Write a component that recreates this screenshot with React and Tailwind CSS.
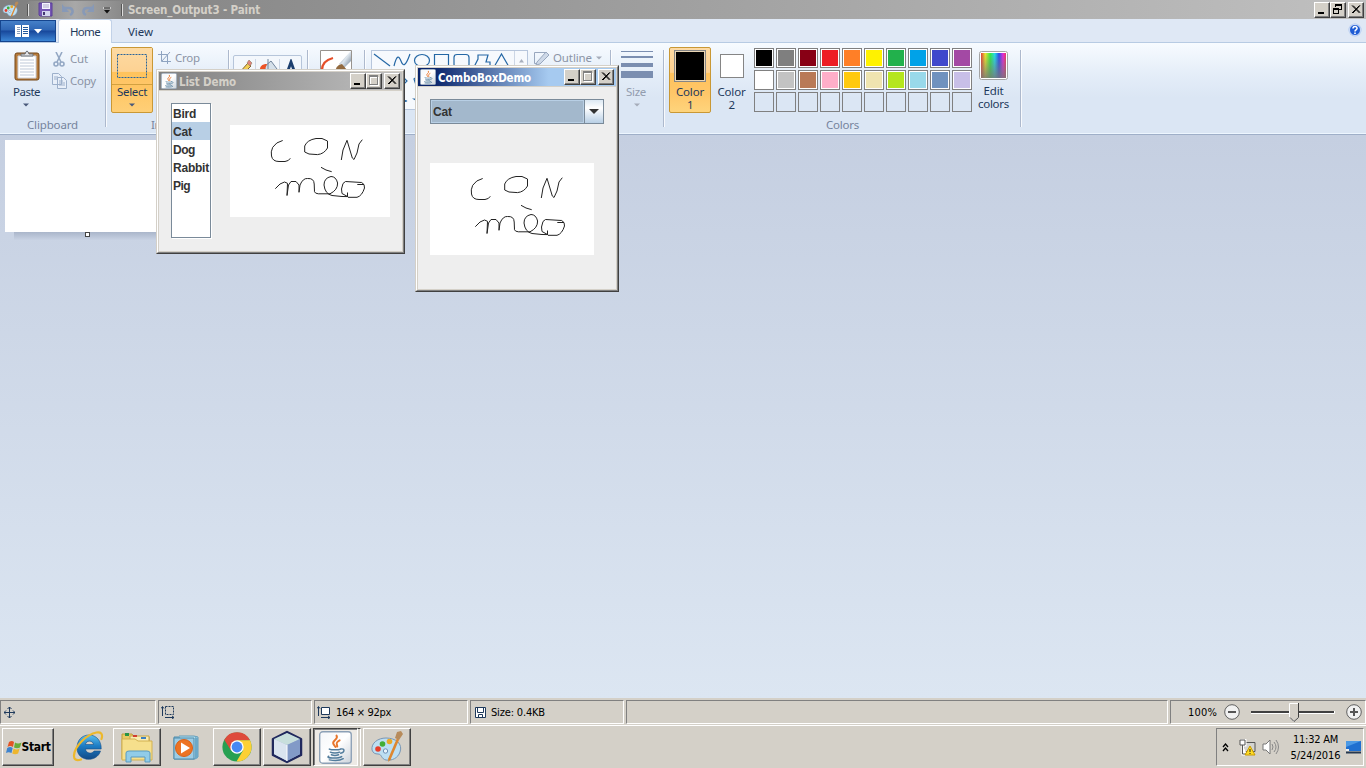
import React, { useLayoutEffect, useRef } from "react";

// Text run whose tracking is adjusted so that it fills a given width.
function Fit({ w, className = "", children }) {
  const ref = useRef(null);
  useLayoutEffect(() => {
    const el = ref.current;
    el.style.letterSpacing = "0px";
    const natural = el.getBoundingClientRect().width;
    el.style.letterSpacing = (w - natural) / String(children).length + "px";
  }, [w, children]);
  return <span ref={ref} className={"inline-block whitespace-pre " + className}>{children}</span>;
}

const Caret = ({ className = "text-[#49597a]" }) => (
  <svg width="6" height="4" className={"block " + className}><path d="M0 0.500h6L3 3.500z" fill="currentColor" /></svg>
);

function Drawing() {
  return (
    <svg width="160" height="92" viewBox="0 0 160 92" fill="none" stroke="#222" strokeWidth="1" className="block">
      <path d="M52.7 15.5Q46 17 42.7 22.3Q40.500 27 41.5 31Q42.500 36.500 49 36.5H55Q59 36 60.3 33.3" />
      <path d="M74.7 21Q77 15 86 13.500H92L97.5 16V23Q94 29 87.500 29.6L79 29L74.700 27Z" />
      <path d="M111.3 35L113 25L117 15.3L122.3 33L124 34.500L127 28L129 19L132.3 14.7" />
      <path d="M91 42.300L96 45L101.7 46.7" />
      <path d="M45.3 63.7L50 59L54.5 57L57.500 58.3L57 70.5L58.500 60L61 56.500L66 56.500L69 60V67.300L70 60Q73 53 77.500 53.500Q84 53 84.200 59L84.500 66.7Q85 68.500 88.300 68.800H100Q107.800 65 107.600 58Q106 51.500 101 51.500Q94 53 94 60Q95 69 102 70.500L112 71.500L118 71.600" />
      <path d="M117.500 67.500V71.500L112 68.500L111.500 64L113 58.500L115.500 56.500L131.7 57.500Q135 59 134.500 63Q132 71 127 72.300H118M127.300 59.500H134" />
    </svg>
  );
}

function JavaCup({ s = 16 }) {
  return (
    <svg width={s} height={s} viewBox="0 0 32 32" className="block">
      <defs><linearGradient id="jc" x1="0" y1="0" x2="1" y2="1"><stop offset="0" stopColor="#f4f6f9" /><stop offset=".5" stopColor="#fff" /><stop offset="1" stopColor="#cbd2da" /></linearGradient></defs>
      <rect x=".7" y=".7" width="30.6" height="30.6" rx="3" fill="url(#jc)" stroke="#8ca0b6" strokeWidth="1.3" />
      <g fill="none" strokeLinecap="round">
        <path d="M17 4.500c2.500 4-5.500 4.500-2.800 8.500l1.800 2.500M20 9c-4.500 2.500-2.500 3.500-2.300 6" stroke="#e8762c" strokeWidth="1.900" />
        <path d="M10 17.500c2 1 9 1 11 0M11 20.500c2 1 7 1 9 0M12 23c2 .8 5 .8 7 0M21 17.500c4.500-1 4 3.500 0 4M9.500 24.500c-4 2 9 2.500 12.500.3M10 28c5 .8 11 .4 13.500-1.200" stroke="#527c9c" strokeWidth="1.400" />
      </g>
    </svg>
  );
}

function WinButton({ type }) {
  return (
    <div className="h-[16px] w-[16px] shrink-0 border border-l-white border-t-white border-b-[#404040] border-r-[#404040] bg-[#d4d0c8] shadow-[inset_-1px_-1px_0_#808080]">
      <svg width="14" height="14" className="block" shapeRendering="crispEdges" fill="none">
        {type === "min" && <path d="M3 9h6v2H3z" fill="#000" />}
        {type === "max" && <><path d="M3.500 3.500h8v8h-8z" stroke="#fff" /><path d="M2.500 1.500h8v9h-8zM2.500 2.500h8" stroke="#808080" /><path d="M3.500 9.500v-6h6" stroke="#fff" /></>}
        {type === "restore" && <path d="M4.500 4V1.500h6v5H8M4 2.500h7M2.500 5.500h5v5h-5zM2 6.500h6" stroke="#000" />}
        {type === "close" && <path d="M3 2.500l7.500 7.500M4 2.500l7 7M10.500 2.500L3 10M11 2.500l-7 7.500" stroke="#000" shapeRendering="auto" />}
      </svg>
    </div>
  );
}

const AppIcon = ({ s = 17 }) => (
  <svg width={s} height={s} viewBox="0 0 34 34" className="block">
    <path d="M16 8C8 8 1 13 2 20c1 3 3 4 6 4 4 0 3 5 8 6 6 1 12-2 14-8 3-8-4-14-14-14z" fill="#bddff3" stroke="#7896b4" />
    <circle cx="8" cy="19" r="2.800" fill="#e63e2a" /><circle cx="12.500" cy="14" r="2.800" fill="#42ad35" /><circle cx="19.500" cy="11.500" r="2.800" fill="#eba927" /><circle cx="15.500" cy="21" r="2.200" fill="#e9f5fc" stroke="#6d8fb5" />
    <path d="M28 9l-9 21" stroke="#dd8730" strokeWidth="2.600" /><path d="M25 8l2-6 4-1 2 3-4 6z" fill="#b78b5b" /><path d="M18 32l1-4 2 1z" fill="#d98024" />
  </svg>
);

function TitleBar() {
  return (
    <div className="flex h-[19px] items-center bg-[linear-gradient(to_right,#808080,#c0c0c0)]">
      <div className="flex w-[27px] pl-[2px]"><AppIcon /></div>
      <div className="flex h-[18px] w-[96px] items-center rounded bg-[linear-gradient(to_right,#868686,#a8a8a8,#898989)]">
        <div className="h-[12px] w-[2px] border-l border-[#555] bg-[#ddd]" />
        <svg width="15" height="15" className="ml-[9px] block"><path d="M1 1h13v13H2l-1-1z" fill="#7657b5" stroke="#5a3e99" /><path d="M4 1h8v6H4z" fill="#f4f4ff" /><path d="M5 3h6M5 5h6" stroke="#ada7c9" /><path d="M4 9h8v5H4z" fill="#d3d5ee" /><path d="M5 10h2v3H5z" fill="#443672" /></svg>
        <svg width="14" height="14" className="ml-[8px] block"><path d="M3 5h5c4 0 5 5 1 7" fill="none" stroke="#8799b7" strokeWidth="2.500" /><path d="M1 1v8h7z" fill="#8799b7" /></svg>
        <svg width="14" height="14" className="ml-[7px] block"><path d="M11 5H6C2 5 1 10 5 12" fill="none" stroke="#8799b7" strokeWidth="2.500" /><path d="M13 1v8H6z" fill="#8799b7" /></svg>
        <svg width="8" height="8" className="ml-[8px] mt-[3px] block"><path d="M0 1h8" stroke="#fff" /><path d="M1 1h6" stroke="#111" /><path d="M1 3h6L4 6.500z" fill="#111" /></svg>
        <div className="ml-[10px] h-[12px] w-[2px] shrink-0 border-l border-[#555] bg-[#ddd]" />
      </div>
      <Fit w={132} className="ml-[5px] mt-[1px] font-['DejaVu_Sans_Condensed','DejaVu_Sans',sans-serif] text-[11.500px] font-bold text-[#d4d0c8]">Screen_Output3 - Paint</Fit>
      <div className="ml-auto mr-[2px] flex"><WinButton type="min" /><WinButton type="restore" /><div className="w-[2px]" /><WinButton type="close" /></div>
    </div>
  );
}

function Tabs() {
  return (
    <div className="flex h-[24px] border-b border-[#b7cbe3] bg-[#dfe8f5]">
      <div className="mt-px flex h-[22px] w-[56px] items-center justify-center gap-[5px] border border-[#15458e] bg-[linear-gradient(#4580c8,#2f66b4_45%,#17479b_50%,#3c86d5)]">
        <svg width="14" height="12" className="block"><path d="M0 0h14v12H0z" fill="#fff" /><path d="M2 2h3v1H2zm0 2h3v1H2zm0 2h3v1H2zm0 2h3v1H2z" fill="#8a9db8" /><path d="M8 2.500h5M8 4.500h5M8 6.500h5M8 8.500h5" stroke="#245a9e" /><path d="M6.500 0v12" stroke="#245a9e" /></svg>
        <svg width="8" height="5" className="block"><path d="M0 0h8L4 4.500z" fill="#fff" /></svg>
      </div>
      <div className="ml-[2px] flex h-[24px] w-[54px] items-center justify-center rounded-t-[3px] border border-b-0 border-[#c2d2e8] bg-linear-to-b from-white to-[#f7fbff] text-[#1e395b]"><Fit w={30}>Home</Fit></div>
      <div className="flex w-[57px] items-center justify-center pt-[2px] text-[#1e395b]"><Fit w={25}>View</Fit></div>
      <svg width="14" height="14" className="ml-auto mr-[4px] mt-[4px] block"><circle cx="7" cy="7" r="6.500" fill="#a9c4ef" /><circle cx="7" cy="7" r="5.500" fill="#1e5cd5" stroke="#fff" strokeWidth=".7" /><path d="M5 5.500C5 2.500 9.300 3 9 5.500 8.800 7 7 6.800 7 8.500M7 9.500v1.500" fill="none" stroke="#fff" strokeWidth="1.600" /></svg>
    </div>
  );
}

function Group({ className = "", label, lw, children }) {
  return (
    <div className={"flex h-[91px] shrink-0 pt-[4px] " + className}>
      <div className="flex min-w-0 flex-1 flex-col">
        <div className="flex h-[70px]">{children}</div>
        <div className="mt-px flex h-[14px] items-center justify-center text-[#76849d]">{label && <Fit w={lw}>{label}</Fit>}</div>
      </div>
      <div className="mt-[3px] h-[77px] w-[2px] shrink-0 border-l border-[#adb9cd] bg-white/80" />
    </div>
  );
}

const Shape = ({ d }) => <svg width="20" height="20" className="block" fill="none" stroke="#2467a5" strokeWidth="1.200"><path d={d} /></svg>;
const shapes = [
  "M2 3L18 15", "M2 15C5 3 7 5 9 10s4 7 9-7", "M2.500 9.500a7.500 6 0 1 0 15 0a7.500 6 0 1 0-15 0", "M2.500 3.500h14v13h-14z", "M5 3.500h9q3 0 3 3v7q0 3-3 3H5q-3 0-3-3v-7q0-3 3-3z", "M2 16L6 8V4h10l-2 7h4v5z", "M2 16L9.500 3L17 16z",
  "M3 3v14h14z", "M10 5l5 5-5 5-5-5z", "M10 2l8 6-3 9H5L2 8z", "M6 3h8l4 7-4 7H6l-4-7z", "M2 7h9V3l7 7-7 7v-4H2z", "M18 7H9V3l-7 7 7 7v-4h9z", "M7 18V9H3l7-7 7 7h-4v9z",
  "M7 2v9H3l7 7 7-7h-4V2z", "M10 5l1 4 4 1-4 1-1 4-1-4-4-1 4-1z", "M10 2l2 6h6l-5 3 2 7-5-4-5 4 2-7-5-3h6z", "M10 2l3 4h5l-3 4 3 5h-5l-3 3-3-3H2l3-5-3-4h5z", "M3 3h14v10H9l-4 4v-4H3z", "M3 8a7 5 0 1 1 6 5l-4 4v-5z", "M4 12a4 4 0 1 1 3-8a5 4 0 1 1 8 8z",
];

const row1 = ["bg-[#000]", "bg-[#7f7f7f]", "bg-[#880015]", "bg-[#ed1c24]", "bg-[#ff7f27]", "bg-[#fff200]", "bg-[#22b14c]", "bg-[#00a2e8]", "bg-[#3f48cc]", "bg-[#a349a4]"];
const row2 = ["bg-white", "bg-[#c3c3c3]", "bg-[#b97a57]", "bg-[#ffaec9]", "bg-[#ffc90e]", "bg-[#efe4b0]", "bg-[#b5e61d]", "bg-[#99d9ea]", "bg-[#7092be]", "bg-[#c8bfe7]"];

function Ribbon() {
  return (
    <div className="flex h-[92px] border-b border-[#9fafc8] bg-[linear-gradient(#f7fbff,#e4edf8_35%,#dbe6f4_60%,#dbe6f4)] shadow-[inset_0_-1px_0_#edf6ff]">
      <Group className="w-[107px]" label="Clipboard" lw={51}>
        <div className="flex w-[52px] flex-col items-center pt-[3px] text-[#1e395b]">
          <svg width="26" height="31" className="ml-[1px] block"><rect x="1" y="3" width="24" height="27" rx="2" fill="#b77c3c" stroke="#754718" /><path d="M4 6h18v22H4z" fill="#fff" stroke="#ccd1dc" /><path d="M6 10h14M6 13h14M6 16h14M6 19h14M6 22h14M6 25h14" stroke="#bfc9d8" /><path d="M7 6V4h4q2-6 4 0h4v2z" fill="#e3e3e6" stroke="#686e77" /></svg>
          <Fit w={27} className="ml-[1px] mt-[3px] leading-[16px]">Paste</Fit>
          <Caret className="mt-[3px] text-[#49597a]" />
        </div>
        <div className="flex flex-col pt-[1px] text-[#8b94a5]">
          <div className="flex h-[22px] items-center"><svg width="13" height="15" className="ml-[1px] block" fill="none" stroke="#94a8c4" strokeWidth="1.600"><path d="M3 0l5 10M9 0L4 10" /><circle cx="3" cy="12" r="2" /><circle cx="9" cy="12" r="2" /></svg><Fit w={18} className="ml-[4px]">Cut</Fit></div>
          <div className="flex h-[22px] items-center"><svg width="16" height="16" className="block" fill="#e8eff9" stroke="#9db0cb"><path d="M.5.500h6l3 3v8h-9zM5.500 4.500h6l3 3v8h-9z" /><path d="M2 4h4M2 6h3M7 8h4M7 10h6M7 12h6" /></svg><Fit w={26} className="ml-[2px]">Copy</Fit></div>
        </div>
      </Group>
      <Group className="w-[123px]" label="Image" lw={33}>
        <div className="ml-[4px] flex h-[66px] w-[42px] flex-col items-center rounded-[2px] border border-[#c99835] bg-[linear-gradient(#fed08a,#ffc562_60%,#fecf77)] text-[#1e395b]">
          <div className="flex h-[37px] w-full items-center justify-center border-b border-[#d3a140] bg-[linear-gradient(#fddaa2,#fdd293_65%,#ffc35b_68%,#ffc668)]"><svg width="30" height="24" className="block"><path d="M.5.500h29v23H.5z" fill="none" stroke="#28649a" strokeDasharray="2 1" /></svg></div>
          <Fit w={30} className="leading-[14px]">Select</Fit>
          <Caret className="mt-[4px] text-[#49597a]" />
        </div>
        <div className="ml-[5px] flex h-[22px] items-center text-[#8b94a5]"><svg width="13" height="14" className="block" fill="none" stroke="#8fa4c1"><path d="M0 3.500h9.500V13M3.500 0v10.500H13M12 1L4 10" /></svg><Fit w={25} className="ml-[4px]">Crop</Fit></div>
      </Group>
      <Group className="w-[79px]" label="Tools" lw={28}>
        <div className="ml-[3px] mt-[8px] flex h-[46px] w-[69px] rounded-[2px] border border-[#b6c5da] bg-[#f3f7fc] pt-[3px]">
          <svg width="22" height="20" className="block border-r border-[#ccd7e6]"><path d="M5 14L14 4l3 3L8 16l-4 1z" fill="#f2ce55" stroke="#806632" /><path d="M13 4l2-3 3 3-2 3z" fill="#e1847c" stroke="#8b7a5f" strokeWidth=".6" /></svg>
          <svg width="24" height="20" className="block border-r border-[#ccd7e6]"><path d="M8 8l7-6 6 8-7 7z" fill="#d5e0ea" stroke="#71859c" /><path d="M12 10V0" stroke="#71859c" /><path d="M4 14C3 7 6 5 11 5l-3 8z" fill="#ec5326" /></svg>
          <svg width="21" height="20" className="block"><path d="M6 17L11 3l5 14M8 12h6" fill="none" stroke="#1d3f6e" strokeWidth="2.800" /></svg>
        </div>
      </Group>
      <Group className="w-[57px]">
        <svg width="32" height="32" className="ml-[11px] mt-[3px] block"><defs><linearGradient id="brush" x2="1" y2="1"><stop stopColor="#4f6379" /><stop offset=".5" stopColor="#dfe7ee" /><stop offset="1" stopColor="#65788d" /></linearGradient></defs><path d="M.5.500h31v31H.5z" fill="#fff" stroke="#97938e" /><path d="M2 22Q1 11 13 8" fill="none" stroke="#e54f29" strokeWidth="2.200" /><path d="M19 14L31 1v10l-7 7z" fill="url(#brush)" /><path d="M15 24Q15 15 22 14l5 6-8 10z" fill="#926a3f" /></svg>
      </Group>
      <Group className="w-[246px]" label="Shapes" lw={37}>
        <div className="ml-[5px] mt-[3px] flex h-[60px] w-[157px] border border-[#b7c6dc] bg-[#f6f9fd]">
          <div className="grid w-[142px] grid-cols-[repeat(7,20px)] content-start overflow-hidden">{shapes.map((d, i) => <Shape key={i} d={d} />)}</div>
          <div className="flex h-[20px] w-[13px] items-center justify-center border-b border-l border-[#ccd6e5]"><svg width="5" height="4"><path d="M0 3.500h5L2.500 0z" fill="#a7afbd" /></svg></div>
        </div>
        <div className="ml-[5px] flex h-[22px] items-center text-[#8b94a5]"><svg width="17" height="16" className="block" fill="none" stroke="#98a7be"><path d="M13 2.500H1.500v11h2" /><path d="M4 12L13 2l3 3L7 14l-4 1z" fill="#ced9e8" /></svg><Fit w={39} className="ml-[3px]">Outline</Fit><Caret className="ml-[4px] text-[#a6acb9]" /></div>
      </Group>
      <Group className="w-[53px]">
        <div className="flex w-[48px] flex-col items-center pt-[4px] text-[#929cae]">
          <div className="ml-[2px] h-px w-[32px] bg-[#7b8eb0]" /><div className="ml-[2px] mt-[4px] h-[2px] w-[32px] bg-[#7b8eb0]" /><div className="ml-[2px] mt-[5px] h-[4px] w-[32px] bg-[#7b8eb0]" /><div className="ml-[2px] mt-[4px] h-[7px] w-[32px] bg-[#7b8eb0]" />
          <Fit w={20} className="mt-[6px] leading-[16px]">Size</Fit><Caret className="ml-[1px] mt-[3px] text-[#a6acb9]" />
        </div>
      </Group>
      <Group className="w-[357px]" label="Colors" lw={33}>
        <div className="ml-[4px] flex h-[66px] w-[42px] flex-col items-center rounded-[2px] border border-[#c99835] bg-[linear-gradient(#fddaa4,#fdd08f_38%,#ffc25c_40%,#ffc668_70%,#fed47c)] text-[#1e395b]">
          <div className="mt-[2px] h-[32px] w-[32px] border border-[#858585] bg-[#ead6b5] p-[1px]"><div className="h-full bg-black" /></div>
          <Fit w={28} className="mt-[3px] leading-[13px]">Color</Fit><Fit w={6} className="leading-[13px]">1</Fit>
        </div>
        <div className="flex w-[41px] flex-col items-center pt-[7px] text-[#1e395b]">
          <div className="h-[24px] w-[24px] border border-[#858585] bg-white" /><Fit w={28} className="mt-[7px] leading-[13px]">Color</Fit><Fit w={6} className="leading-[13px]">2</Fit>
        </div>
        <div className="ml-[2px] mt-[1px] grid h-[64px] grid-cols-[repeat(10,20px)] grid-rows-[repeat(3,20px)] gap-[2px]">
          {[...row1, ...row2].map((c, i) => <div key={i} className="border border-[#808080] bg-white p-[1px]"><div className={"h-full " + c} /></div>)}
          {row1.map((c) => <div key={c} className="border border-[#808080]" />)}
        </div>
        <div className="flex w-[43px] flex-col items-center pt-[4px] text-[#1e395b]">
          <svg width="30" height="30" className="block"><defs><linearGradient id="hue"><stop stopColor="#e53c35" /><stop offset=".17" stopColor="#eee82d" /><stop offset=".37" stopColor="#30ed45" /><stop offset=".55" stopColor="#23ddec" /><stop offset=".72" stopColor="#294bee" /><stop offset=".88" stopColor="#e72adf" /><stop offset="1" stopColor="#ef355c" /></linearGradient><linearGradient id="fade" x2="0" y2="1"><stop stopColor="#777" stopOpacity="0" /><stop offset="1" stopColor="#777" stopOpacity=".85" /></linearGradient></defs><rect x=".5" y=".5" width="28" height="28" rx="2" fill="#fff" stroke="#a3a3a3" /><path d="M2 2h25v25H2z" fill="url(#hue)" /><path d="M2 2h25v25H2z" fill="url(#fade)" /></svg>
          <Fit w={20} className="mt-[3px] leading-[13px]">Edit</Fit><Fit w={31} className="leading-[13px]">colors</Fit>
        </div>
      </Group>
    </div>
  );
}

function DemoWindow({ title, tw, active, className, children }) {
  return (
    <div className={"absolute border border-b-[#404040] border-l-[#d4d0c8] border-r-[#404040] border-t-[#d4d0c8] bg-[#eee] " + className}>
      <div className="flex h-full flex-col border border-b-[#808080] border-l-white border-r-[#808080] border-t-white">
        <div className="flex h-full flex-col border border-[#d4d0c8]">
          <div className={"flex h-[18px] shrink-0 items-center pl-[2px] pr-[2px] " + (active ? "bg-[linear-gradient(to_right,#0a246a_8%,#a6caf0_66%)] text-white" : "bg-[linear-gradient(to_right,#808080,#c0c0c0)] text-[#d4d0c8]")}>
            <JavaCup />
            <Fit w={tw} className="ml-[2px] mt-px font-['DejaVu_Sans_Condensed','DejaVu_Sans',sans-serif] text-[11.500px] font-bold">{title}</Fit>
            <div className="ml-auto flex"><WinButton type="min" /><WinButton type="max" /><div className="w-[2px]" /><WinButton type="close" /></div>
          </div>
          <div className="h-px shrink-0 bg-[#d4d0c8]" />
          {children}
        </div>
      </div>
    </div>
  );
}

const animals = [["Bird", 23], ["Cat", 19], ["Dog", 22], ["Rabbit", 36], ["Pig", 17]];

function ListDemo() {
  return (
    <DemoWindow title="List Demo" tw={57} className="left-[156px] top-[69px] h-[185px] w-[249px]">
      <div className="flex pl-[12px] pt-[12px] font-['Liberation_Sans',sans-serif] text-[12px] font-bold text-[#333]">
        <div className="h-[135px] w-[40px] border border-[#7a8a99] bg-white shadow-[1px_1px_0_#fff]">
          {animals.map(([name, w]) => <div key={name} className={"flex h-[18px] items-center pl-px pt-[2px] " + (name === "Cat" ? "bg-[#b8cfe5]" : "")}><Fit w={w}>{name}</Fit></div>)}
        </div>
        <div className="ml-[19px] mt-[22px] h-[92px] w-[160px] bg-white"><Drawing /></div>
      </div>
    </DemoWindow>
  );
}

function ComboDemo() {
  return (
    <DemoWindow title="ComboBoxDemo" tw={93} active className="left-[415px] top-[65px] h-[227px] w-[204px]">
      <div className="flex flex-col pl-[12px] pt-[12px] font-['Liberation_Sans',sans-serif] text-[12px] font-bold text-[#333]">
        <div className="flex h-[25px] w-[174px] border border-[#7a8a99]">
          <div className="flex w-[153px] items-center border border-[#b8cfe5] bg-[#a3b8cc] pl-[1px]"><Fit w={19}>Cat</Fit></div>
          <div className="flex flex-1 items-center justify-center border-l border-[#7a8a99] bg-linear-to-b from-[#dce8f3] via-white via-35% to-[#b8cfe5]"><svg width="10" height="5" className="block"><path d="M0 0h10L5 5z" fill="#333" /></svg></div>
        </div>
        <div className="mt-[39px] h-[92px] w-[164px] bg-white"><Drawing /></div>
      </div>
    </DemoWindow>
  );
}

function Workspace() {
  return (
    <div className="h-[563px] bg-linear-to-b from-[#c5cfe1] to-[#dce6f2] pl-[5px] pt-[5px]">
      <div className="h-[92px] w-[164px] bg-white" />
      <div className="ml-[9px] flex h-[8px] w-[160px] bg-linear-to-b from-[#aab6ca] to-[#c8d2e3]"><div className="ml-[71px] h-[5px] w-[5px] border border-[#444] bg-white" /></div>
    </div>
  );
}

const pane = "flex h-[24px] items-center border border-b-white border-l-[#808080] border-r-white border-t-[#808080] ";
const Round = ({ plus }) => <svg width="16" height="16" className="block" fill="none"><circle cx="8" cy="8" r="7.300" fill="#f1f1f1" stroke="#606060" /><path d={plus ? "M4 8h8M8 4v8" : "M4 8h8"} stroke="#555" strokeWidth="2" /></svg>;

function StatusBar() {
  return (
    <div className="flex h-[26px] gap-[2px] bg-[#d4d0c8] pt-[2px] font-['DejaVu_Sans_Condensed','DejaVu_Sans',sans-serif] text-[11px] text-black">
      <div className={pane + "w-[156px] pl-[3px]"}><svg width="11" height="11" className="block" fill="none" stroke="#1e395b"><path d="M0 5.500h11M5.500 0v11M3.500 2l2-2 2 2M3.500 9l2 2 2-2M2 3.500l-2 2 2 2M9 3.500l2 2-2 2" /></svg></div>
      <div className={pane + "w-[154px] pl-[2px]"}><svg width="14" height="13" className="block" fill="none" stroke="#1e395b"><path d="M1.500 10V1M0 2.500l1.500-2 1.500 2M4 11.500h9M11 10l2 1.500-2 1.500" /><path d="M4.500.500h8v8h-8z" strokeDasharray="2 1" /></svg></div>
      <div className={pane + "w-[154px] pl-[2px]"}><svg width="14" height="13" className="block" fill="none" stroke="#1e395b"><path d="M1.500 10V1M0 2.500l1.500-2 1.500 2M4 11.500h9M11 10l2 1.500-2 1.500" /><path d="M4.500 1.500h8v7h-8z" fill="#fff" /></svg><Fit w={55} className="ml-[5px] pt-px">164 × 92px</Fit></div>
      <div className={pane + "w-[154px] pl-[4px]"}><svg width="11" height="11" className="block" fill="#fff" stroke="#1e395b"><path d="M.5.500h10v10H.5zM2.500.500h6v5h-6zM3.500 7.500h4v3h-4z" /></svg><Fit w={54} className="ml-[5px] pt-px">Size: 0.4KB</Fit></div>
      <div className={pane + "w-[542px]"} />
      <div className={pane + "w-[196px] pl-[17px]"}>
        <Fit w={29} className="pt-px">100%</Fit><div className="ml-[7px]"><Round /></div>
        <svg width="84" height="20" className="ml-[11px] block"><path d="M0 9h83v2H0z" fill="#404040" /><path d="M0 11.500h83.500V9" stroke="#fff" fill="none" /><path d="M38.500 1.500h9v14l-4.500 4-4.500-4z" fill="#d4d0c8" stroke="#fff" /><path d="M47.500 1v14.500l-4.500 4-4-4" fill="none" stroke="#404040" /></svg>
        <div className="ml-[11px]"><Round plus /></div>
      </div>
    </div>
  );
}

const raised = "flex h-[38px] shrink-0 items-center justify-center border border-l-white border-t-white border-b-[#404040] border-r-[#404040] shadow-[inset_-1px_-1px_0_#808080] ";
const WinFlag = () => <svg width="16" height="15" className="block"><path d="M3 2q3-2 5 0L7 7Q4 5 1.500 7z" fill="#e35424" /><path d="M9 2.500q3 2 6.500 0l-1.500 5q-3 1.500-6 0z" fill="#69ad38" /><path d="M1.200 8q3-2 5.500 0l-1.200 5q-3-1.500-5.500 0z" fill="#3e83ce" /><path d="M7.600 8.500q3 1.800 6 0l-1.500 5q-3 1.500-5.800 0z" fill="#eeb62e" /></svg>;

function Taskbar() {
  return (
    <div className="flex h-[44px] bg-[#d4d0c8] font-['DejaVu_Sans_Condensed','DejaVu_Sans',sans-serif] text-[11px] shadow-[inset_0_1px_0_#d4d0c8,inset_0_2px_0_#fff]">
      <div className="flex items-center pl-[2px] pt-[2px]">
        <div className={raised + "w-[52px]"}><WinFlag /><Fit w={29} className="text-[12px] font-bold text-black">Start</Fit></div>
        <svg width="32" height="32" className="ml-[18px] block" fill="none"><defs><linearGradient id="ie" x2="0" y2="1"><stop stopColor="#5cc0ee" /><stop offset=".45" stopColor="#1d7cc4" /><stop offset="1" stopColor="#124a86" /></linearGradient></defs><path fillRule="evenodd" d="M17 4C24.500 4 29.500 10 29.200 18H13.500C13.800 22.500 20 23.500 22 20H28.500C25 32 5 31 5 17C5 9 10 4 17 4zM13.500 13.500H21.500C21 9 14 9 13.500 13.500z" fill="url(#ie)" stroke="#164f8a" strokeWidth=".6" /><path d="M9 28.500C-1 32 0 20 10 10 19 1 33-3 29.500 8" stroke="#edb82b" strokeWidth="2.200" strokeLinecap="round" /></svg>
        <div className={raised + "ml-[9px] w-[48px]"}><svg width="34" height="32" className="block"><path d="M2 3h10l2 3h15v22H2z" fill="#e8ca64" stroke="#bd9b3b" /><path d="M10 5h19v18H10z" fill="#f9ecb1" stroke="#c6a548" /><path d="M2 8h13l3 2h14v19H2z" fill="#f6df8c" stroke="#d2b150" /><path d="M5 2h4v3H5z" fill="#279345" /><path d="M13 4h4v2h-4z" fill="#d13d31" /><path d="M21 6h5v2h-5z" fill="#3b80c3" /><path d="M6 31v-9q0-2 3-2h18q3 0 3 2v9h-5v-5H11v5z" fill="#91cce8" stroke="#5b9bc0" /></svg></div>
        <svg width="29" height="28" className="ml-[12px] block"><path d="M1 4h21v22H1z" fill="#8fc6df" stroke="#518cac" /><path d="M6 3h15l4 1v20l-3 2" fill="#b2ddec" stroke="#629dbb" /><path d="M1 5h20v21H1z" fill="#9dcce4" stroke="#518cac" /><path d="M22 4l3 1v20l-3 1z" fill="#6ca9c8" /><circle cx="11" cy="15" r="8.500" fill="#ed7323" stroke="#d86119" /><path d="M8 9.500l9 5.500-9 5.500z" fill="#fff" /></svg>
        <div className={raised + "ml-[11px] w-[48px]"}><svg width="30" height="30" viewBox="-15 -15 30 30" className="block"><circle r="14.600" fill="#27a052" /><path d="M-12.700-7.300A14.600 14.600 0 0 1 13-6.700H0L-6 3.500z" fill="#de4b3c" /><path d="M13-6.700A14.600 14.600 0 0 1-.5 14.600L6 3.500 0-6.700z" fill="#fdd034" /><circle r="6.700" fill="#fff" /><circle r="5.400" fill="#4788f4" /></svg></div>
        <div className={raised + "ml-[2px] w-[48px]"}><svg width="32" height="34" className="block"><path d="M16 2l14 7v16l-14 7L2 25V9z" fill="#a7b9d2" stroke="#20285d" strokeWidth="2.500" strokeLinejoin="round" /><path d="M3 9l13-6 13 6-13 6z" fill="#c8dfdc" /><path d="M3 9l13 6v16L3 24z" fill="#dae4ef" /><path d="M16 15l13-6v15l-13 7z" fill="#829ac7" /><path d="M16 15v16" stroke="#fff" /></svg></div>
        <div className="ml-[2px] flex h-[38px] w-[45px] items-center justify-center border border-b-white border-l-[#404040] border-r-white border-t-[#404040] bg-[#edeae5] shadow-[inset_1px_1px_0_#808080]"><JavaCup s={33} /></div>
        <div className="h-[38px] w-[3px] border-r border-t border-r-white border-t-[#404040]" />
        <div className={raised + "ml-[2px] w-[48px]"}><AppIcon s={34} /></div>
      </div>
      <div className="ml-auto mr-[2px] mt-[4px] flex h-[38px] w-[148px] items-center border border-b-white border-l-[#808080] border-r-white border-t-[#808080] text-black">
        <svg width="7" height="9" className="ml-[5px] block" fill="none" stroke="#000" strokeWidth="1.300"><path d="M1 4l2.500-3L6 4M1 8l2.500-3L6 8" /></svg>
        <svg width="17" height="17" className="ml-[10px] block"><path d="M5 3.500h11v9H5z" fill="#d4d4d0" stroke="#555" /><path d="M1 1h5v5H4v9h3" fill="none" stroke="#fff" strokeWidth="3" /><path d="M1 1h5v5H1zM3.500 6v9H8" fill="#fff" stroke="#555" /><path d="M11 7l5 9H6z" fill="#ffdc24" stroke="#c89a00" /><path d="M11 10v3m0 1v1" stroke="#222" /></svg>
        <svg width="18" height="16" className="ml-[6px] block" fill="none" stroke="#888"><path d="M1 5h3l4-4v14l-4-4H1z" fill="#fff" stroke="#777" /><path d="M10 5q2 3 0 6M12 3q4 5 0 10M14 1q5 7 0 14" /></svg>
        <div className="ml-[9px] flex w-[53px] flex-col items-center gap-[1px]"><Fit w={45} className="leading-[15px]">11:32 AM</Fit><Fit w={50} className="leading-[15px]">5/24/2016</Fit></div>
        <svg width="16" height="15" className="ml-[3px] block"><path d="M1 1h15v10H1z" fill="#1f6fd0" /><path d="M1 1h15L1 7z" fill="#4b99e5" /><path d="M1 11.500h15v2H1z" fill="#26384f" /><path d="M1 9h3v2H1z" fill="#eee" /></svg>
      </div>
    </div>
  );
}

export default function App() {
  return (
    <div className="relative flex h-[768px] w-[1366px] flex-col overflow-hidden font-['Noto_Sans',sans-serif] text-[11.500px] leading-[14px]">
      <TitleBar />
      <Tabs />
      <Ribbon />
      <Workspace />
      <StatusBar />
      <Taskbar />
      <ListDemo />
      <ComboDemo />
    </div>
  );
}
